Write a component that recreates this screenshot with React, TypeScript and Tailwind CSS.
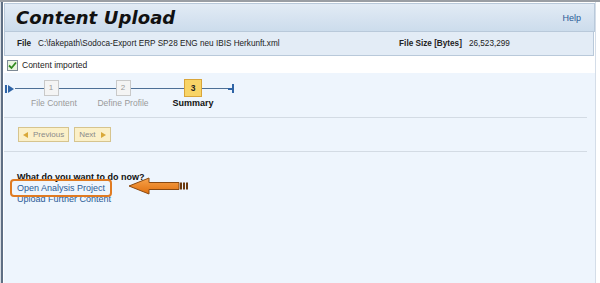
import React from "react";

function Arrow() {
  return (
    <svg width="62" height="18" viewBox="0 0 62 18">
      <defs>
        <linearGradient id="ag" x1="0" y1="0" x2="0" y2="1">
          <stop offset="0" stopColor="#f7a24a" />
          <stop offset="1" stopColor="#e0700f" />
        </linearGradient>
      </defs>
      <path d="M1 9 L21 1 L21 5.5 L51 5.5 L51 12.5 L21 12.5 L21 17 Z" fill="url(#ag)" stroke="#8a4a12" strokeWidth="1" />
      <rect x="52" y="5.5" width="2" height="7" fill="#6b3a10" />
      <rect x="55" y="5.5" width="2" height="7" fill="#6b3a10" />
      <rect x="58" y="5.5" width="2" height="7" fill="#6b3a10" />
    </svg>
  );
}

export default function App() {
  return (
    <div
      className="w-[600px] h-[283px] bg-white overflow-hidden relative"
      style={{ fontFamily: '"Liberation Sans", Arial, sans-serif' }}
    >
      <div className="h-[2px] bg-[#9a9ea4]" />
      <div className="flex h-[281px]">
        <div className="w-[1px] bg-[#d8dde3]" />
        <div className="w-[2px] bg-[#5f6f84]" />
        <div className="w-[1px] bg-white" />
        <div className="w-[592px] flex flex-col border-r border-[#d4dde8]">
          {/* Header */}
          <div className="h-[29px] mt-[1px] bg-gradient-to-b from-[#e2ebf5] to-[#ccdcec] border border-[#b9c9da] flex items-center justify-between pl-[11px] pr-[13px]">
            <span
              className="text-[18px] font-bold italic text-[#111] tracking-[0.1px]"
              style={{ fontFamily: '"DejaVu Sans", Verdana, sans-serif' }}
            >
              Content Upload
            </span>
            <span className="text-[9px] text-[#2b5c98] mt-[3px]">Help</span>
          </div>
          {/* File row */}
          <div className="h-[24px] bg-[#e3ecf6] border-x border-b border-[#b9c9da] flex items-center pt-[2px] text-[8.2px] text-[#222] mr-[1px]">
            <span className="font-bold ml-[12px]">File</span>
            <span className="ml-[7px] w-[361px]">C:\fakepath\Sodoca-Export ERP SP28 ENG neu IBIS Herkunft.xml</span>
            <span className="font-bold">File Size [Bytes]</span>
            <span className="ml-[7px]">26,523,299</span>
          </div>
          {/* Content imported */}
          <div className="h-[17px] bg-white flex items-center pl-[3px] pt-[1px]">
            <div className="w-[11px] h-[11px] border border-[#7d8a96] bg-[#e9f5df] flex items-center justify-center">
              <svg width="9" height="9" viewBox="0 0 9 9">
                <path d="M1 4.5 L3.5 7 L8 1.5" fill="none" stroke="#2f8a1e" strokeWidth="1.8" />
              </svg>
            </div>
            <span className="ml-[4px] text-[8.5px] text-[#222]">Content imported</span>
          </div>
          {/* Main */}
          <div className="flex-1 bg-[#eef5fd] flex flex-col">
            {/* Stepper */}
            <div className="h-[44px] relative">
              <div className="absolute left-[1px] top-[12px] flex items-center">
                <div className="w-[2px] h-[8px] bg-[#2f64a6]" />
                <svg width="6" height="8" viewBox="0 0 6 8" className="ml-[1px]">
                  <path d="M0 0 L6 4 L0 8 Z" fill="#2f64a6" />
                </svg>
              </div>
              <div className="absolute left-[11px] top-[15px] w-[214px] h-[1px] bg-[#4d6f96]" />
              <div className="absolute left-[224px] top-[11px] flex items-center">
                <div className="w-[4px] h-[2px] bg-[#2f64a6]" />
                <div className="w-[2px] h-[9px] bg-[#2f64a6]" />
              </div>
              <div className="absolute left-[15px] top-[7px] w-[64px] flex flex-col items-center">
                <div className="w-[15px] h-[16px] bg-[#f4f4f4] border border-[#c9c9c9] text-[8px] text-[#9a9a9a] flex items-center justify-center">1</div>
                <span className="mt-[3px] ml-[6px] leading-none text-[8.5px] text-[#9a9a9a]">File Content</span>
              </div>
              <div className="absolute left-[81px] top-[7px] w-[76px] flex flex-col items-center">
                <div className="w-[15px] h-[16px] bg-[#f4f4f4] border border-[#c9c9c9] text-[8px] text-[#9a9a9a] flex items-center justify-center">2</div>
                <span className="mt-[3px] leading-none text-[8.5px] text-[#9a9a9a]">Define Profile</span>
              </div>
              <div className="absolute left-[161px] top-[6px] w-[56px] flex flex-col items-center">
                <div className="w-[18px] h-[18px] bg-[#f8d467] border border-[#d9a53a] text-[8.5px] font-bold text-[#222] flex items-center justify-center">3</div>
                <span className="mt-[2px] leading-none text-[9px] font-bold text-[#111]">Summary</span>
              </div>
            </div>
            <div className="h-[1px] bg-[#d3dbe4] mr-[8px]" />
            {/* Buttons */}
            <div className="h-[33px] flex items-center pl-[14px] gap-[5px]">
              <div className="h-[15px] px-[4px] bg-[#fbf0c8] border border-[#d6c48e] flex items-center text-[8px] text-[#8a8a8a]">
                <svg width="5" height="6" viewBox="0 0 5 6" className="mr-[5px]"><path d="M5 0 L0 3 L5 6 Z" fill="#d9a93a" /></svg>
                Previous
              </div>
              <div className="h-[15px] px-[4px] bg-[#fbf0c8] border border-[#d6c48e] flex items-center text-[8px] text-[#8a8a8a]">
                Next
                <svg width="5" height="6" viewBox="0 0 5 6" className="ml-[5px]"><path d="M0 0 L5 3 L0 6 Z" fill="#d9a93a" /></svg>
              </div>
            </div>
            <div className="h-[1px] bg-[#d3dbe4] mr-[8px]" />
            {/* Actions */}
            <div className="pl-[13px] pt-[20px] flex flex-col text-[9px] leading-[10.5px]">
              <span className="font-bold text-[#111]">What do you want to do now?</span>
              <div className="flex items-center h-[10.5px]">
                <span className="text-[#2b5c98] border-2 border-[#e07b22] rounded-[4px] -ml-[7px] px-[5px] py-[2px] relative z-10">Open Analysis Project</span>
                <div className="ml-[16px] -mt-[3px] relative z-10 h-[18px]"><Arrow /></div>
              </div>
              <span className="text-[#2b5c98] mt-[1px]">Upload Further Content</span>
            </div>
          </div>
        </div>
        <div className="w-[4px] bg-white" />
      </div>
    </div>
  );
}
